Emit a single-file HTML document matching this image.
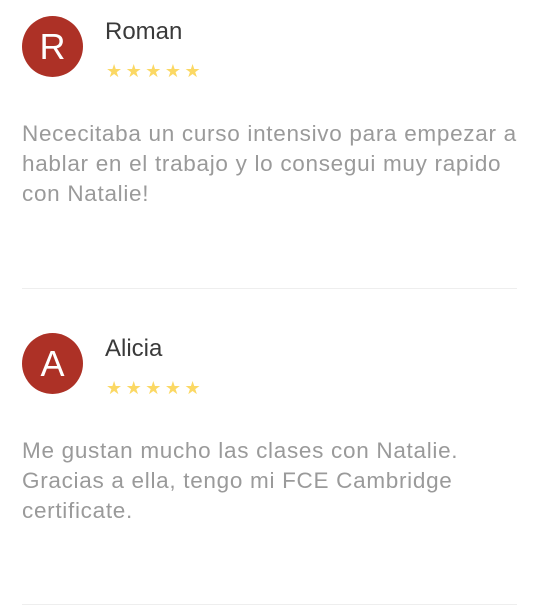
<!DOCTYPE html>
<html><head><meta charset="utf-8"><style>
body{margin:0;width:540px;height:610px;background:#fff;font-family:"Liberation Sans",Roboto,sans-serif;position:relative;overflow:hidden}
.av{position:absolute;left:22px;width:61px;height:61px;border-radius:50%;background:#ad3126;color:#fff;font-size:36px;line-height:61px;text-align:center}
.nm{position:absolute;left:105px;font-size:24px;color:#3a3a3a}
.st{position:absolute;left:106px;color:#fbd864;font-size:18px;letter-spacing:3.5px}
.tx{position:absolute;left:22px;width:530px;font-size:22.5px;letter-spacing:0.7px;line-height:30px;color:#9a9a9a;white-space:nowrap}
.hr{position:absolute;left:22px;width:495px;height:1px;background:#eeeeee}
</style></head><body>
<div class="av" style="top:16px">R</div>
<div class="nm" style="top:18px">Roman</div>
<div class="st" style="top:61px">★★★★★</div>
<div class="tx" style="top:119px">Nececitaba un curso intensivo para empezar a<br>hablar en el trabajo y lo consegui muy rapido<br>con Natalie!</div>
<div class="hr" style="top:288px"></div>
<div class="av" style="top:333px">A</div>
<div class="nm" style="top:335px">Alicia</div>
<div class="st" style="top:378px">★★★★★</div>
<div class="tx" style="top:436px">Me gustan mucho las clases con Natalie.<br>Gracias a ella, tengo mi FCE Cambridge<br>certificate.</div>
<div class="hr" style="top:604px"></div>
</body></html>
